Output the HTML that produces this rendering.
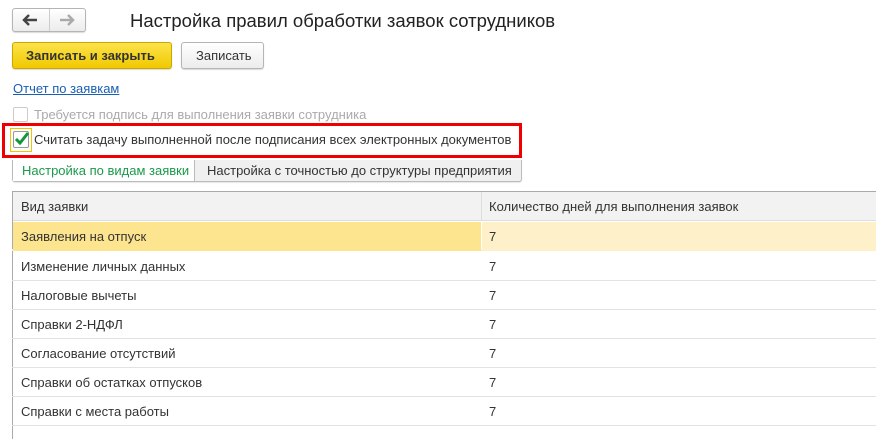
<!DOCTYPE html>
<html><head><meta charset="utf-8"><style>
*{box-sizing:border-box;margin:0;padding:0}
body{width:876px;height:439px;overflow:hidden;background:#fff;font-family:Arial,"Liberation Sans","Noto Sans CJK SC",sans-serif;font-size:13px;color:#333;position:relative}
.a{position:absolute}
.btn{position:absolute;border:1px solid #b5b5b5;border-radius:3px;background:linear-gradient(#fff,#ececec);box-shadow:0 1px 1px rgba(0,0,0,.15)}
.row{position:absolute;left:12px;width:864px;height:29px;border-bottom:1px solid #e2e2e2}
.row span{position:absolute;top:7px}
</style></head><body>
<div class="btn" style="left:12px;top:8px;width:74px;height:24px"></div>
<div class="a" style="left:49px;top:9px;width:1px;height:22px;background:#ccc"></div>
<svg class="a" style="left:22px;top:13px" width="16" height="14"><path d="M2 7H15M7 2L2 7L7 12" stroke="#444" stroke-width="2.5" fill="none"/></svg>
<svg class="a" style="left:59px;top:13px" width="16" height="14"><path d="M1 7H14M9 2L14 7L9 12" stroke="#aaa" stroke-width="2.5" fill="none"/></svg>
<div class="a" style="left:130px;top:10px;font-size:18.5px;color:#222">Настройка правил обработки заявок сотрудников</div>
<div class="btn" style="left:12px;top:42px;width:160px;height:27px;background:linear-gradient(#fbe34a,#f1c900);border-color:#c9a800"></div>
<div class="a" style="left:26px;top:48px;font-weight:bold;color:#333">Записать и закрыть</div>
<div class="btn" style="left:181px;top:42px;width:83px;height:27px"></div>
<div class="a" style="left:196px;top:48px">Записать</div>
<div class="a" style="left:13px;top:81px;color:#1a5fb4;text-decoration:underline">Отчет по заявкам</div>
<div class="a" style="left:13px;top:107px;width:15px;height:15px;border:1px solid #ccc;border-radius:2px"></div>
<div class="a" style="left:34px;top:107px;color:#aaa">Требуется подпись для выполнения заявки сотрудника</div>
<div class="a" style="left:2px;top:123px;width:520px;height:35px;border:3px solid #ee0000"></div>
<div class="a" style="left:10px;top:128px;width:22px;height:24px;border:1px solid #f1c400"></div>
<div class="a" style="left:13px;top:131px;width:16px;height:17px;border:1px solid #999;border-radius:2px;background:#fff"></div>
<svg class="a" style="left:13px;top:130px" width="18" height="18"><path d="M3 9L7 13L15 3" stroke="#11963a" stroke-width="3" fill="none"/></svg>
<div class="a" style="left:34px;top:132px;color:#333">Считать задачу выполненной после подписания всех электронных документов</div>
<div class="a" style="left:12px;top:160px;width:510px;height:22px;border:1px solid #bbb;border-top:none;border-radius:0 0 3px 3px;background:#f0f0f0;box-shadow:0 1px 1px rgba(0,0,0,.1)"></div>
<div class="a" style="left:13px;top:160px;width:182px;height:21px;background:#fff;border-right:1px solid #bbb"></div>
<div class="a" style="left:22px;top:163px;color:#1a9a4a">Настройка по видам заявки</div>
<div class="a" style="left:207px;top:163px;color:#333">Настройка с точностью до структуры предприятия</div>
<div class="a" style="left:12px;top:191px;width:864px;height:248px;border:1px solid #aaa;border-right:none;border-bottom:none"></div>
<div class="a" style="left:13px;top:192px;width:863px;height:29px;background:#f2f2f2;border-bottom:1px solid #ddd"></div>
<div class="a" style="left:481px;top:192px;width:1px;height:29px;background:#ddd"></div>
<div class="a" style="left:21px;top:199px">Вид заявки</div>
<div class="a" style="left:489px;top:199px">Количество дней для выполнения заявок</div>
<div class="row" style="top:222px;border-bottom:2px solid #eee"><div class="a" style="left:1px;top:0;width:468px;height:29px;background:#fde58f"></div><div class="a" style="left:470px;top:0;width:394px;height:29px;background:#fef1c9"></div><span style="left:9px">Заявления на отпуск</span><span style="left:477px">7</span></div>
<div class="row" style="top:252px"><span style="left:9px">Изменение личных данных</span><span style="left:477px">7</span></div>
<div class="row" style="top:281px"><span style="left:9px">Налоговые вычеты</span><span style="left:477px">7</span></div>
<div class="row" style="top:310px"><span style="left:9px">Справки 2-НДФЛ</span><span style="left:477px">7</span></div>
<div class="row" style="top:339px"><span style="left:9px">Согласование отсутствий</span><span style="left:477px">7</span></div>
<div class="row" style="top:368px"><span style="left:9px">Справки об остатках отпусков</span><span style="left:477px">7</span></div>
<div class="row" style="top:397px"><span style="left:9px">Справки с места работы</span><span style="left:477px">7</span></div>
</body></html>
